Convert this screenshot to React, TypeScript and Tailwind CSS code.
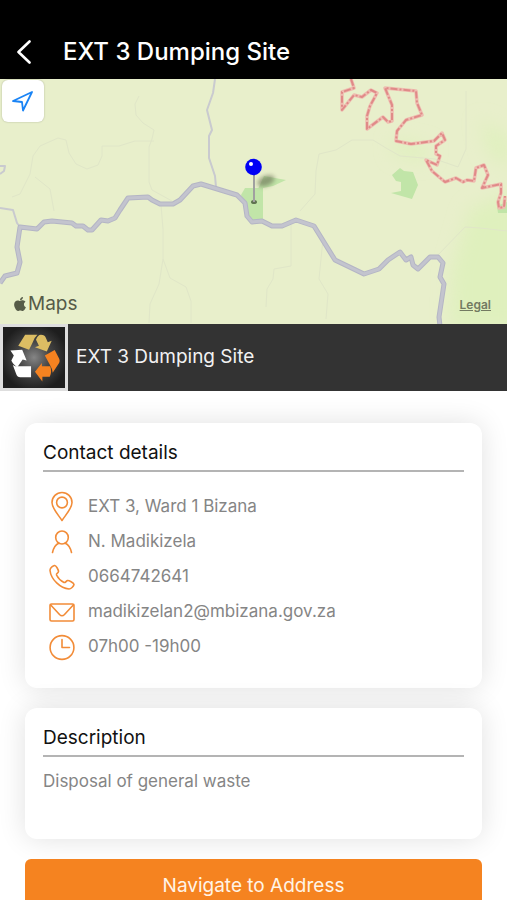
import { useState } from "react";
import type { ReactNode } from "react";
import { FaApple } from "react-icons/fa";

const MINOR_ROADS = [
  "M139 17 L135 25 L136 36 L143 44 L154 51 L152 60 L149 68 L149 103 L152 111 L172 122",
  "M154 62 L135 62 L119 67 L102 67 L102 77 L98 86 L87 90 L76 85 L69 74 L66 61 L58 59 L40 67 L33 77 L30 95 L20 115 L12 118",
  "M35 98 L50 110 L54 132",
  "M161 126 L163 150 L163 180 L170 199 L186 208 L191 222 L191 244",
  "M163 180 L159 205 L150 225 L149 244",
  "M466 12 L466 70 L458 88 L435 80 L400 77 L386 69 L373 61 L352 61 L336 71 L319 75 L316 92 L315 115 L300 132",
  "M291 146 L291 187 L274 190 L273 200 L267 210 L266 228",
  "M323 160 L319 200 L328 215 L326 240",
  "M438 176 L465 148 L480 149 L507 152",
];

const MAIN_ROAD =
  "M0 204 L5 197 L17 194 L20 183 L17 168 L20 148 L37 150 L44 143 L52 142 L72 144 L76 147 L83 147 L88 151 L92 151 L101 141 L108 142 L115 139 L120 131 L128 119 L148 118 L152 121 L160 125 L173 125 L180 121 L193 107 L201 105 L237 116 L245 124 L247 137 L252 143 L262 142 L272 147 L282 147 L296 141 L314 147 L335 181 L364 195 L379 190 L388 181 L400 173 L406 181 L411 178 L413 186 L418 190 L430 178 L438 178 L443 184 L440 198 L444 205 L439 238 L440 247";

const BORDER_LINE =
  "M351 0 L354 9 L342 13 L342 31 L354 16 L362 18 L371 11 L377 14 L370 27 L367 37 L367 50 L383 38 L388 43 L392 42 L392 26 L385 9 L416 12 L417 24 L422 36 L406 41 L397 52 L396 62 L411 65 L434 62 L442 54 L445 61 L436 67 L436 75 L440 77 L437 86 L426 81 L432 92 L445 103 L456 99 L463 103 L467 101 L474 102 L476 89 L484 86 L488 96 L482 109 L501 105 L501 114 L498 123 L499 129 L504 128 L505 117";

function MapDrawing() {
  return (
    <svg
      className="absolute inset-0 h-full w-full"
      viewBox="0 0 507 245"
      preserveAspectRatio="xMidYMid slice"
      fill="none"
      strokeLinejoin="round"
      aria-hidden="true"
    >
      <defs>
        <filter id="soft" x="-50%" y="-50%" width="200%" height="200%">
          <feGaussianBlur stdDeviation="2" />
        </filter>
        <filter id="haze" x="-50%" y="-50%" width="200%" height="200%">
          <feGaussianBlur stdDeviation="9" />
        </filter>
      </defs>
      <rect width="507" height="245" fill="#e8efcb" />
      <g fill="#dff0bd" filter="url(#haze)">
        <path d="M470 130 L520 110 L520 250 L450 250 L452 190 Z" />
        <path d="M480 40 L510 60 L510 90 L490 75 Z" />
        <path d="M392 60 L430 68 L425 82 L395 76 Z" />
      </g>
      <g stroke="#e0e6c8" strokeWidth="1">
        {MINOR_ROADS.map((d) => (
          <path key={d} d={d} />
        ))}
      </g>
      <g fill="#c1e5a8">
        <path d="M392 96 L400 89 L404 92 L413 93 L418 106 L412 120 L391 114 L401 112 L401 103 L396 102 Z" />
        <path d="M241 116 L245 109 L263 109 L263 141 L252 142 L247 134 Z" />
        <path d="M258 110 L264 97 L286 101 L273 107 Z" />
        <path d="M497 127 L507 123 L507 134 L498 134 Z" />
      </g>
      <g stroke="#c9cacf" strokeWidth="2">
        <path d="M215 0 L213 14 L207 31 L212 51 L209 57 L209 79 L215 97 L216 108" />
        <path d="M0 129 L13 131 L17 144 L20 148" />
        <path d="M0 87 L5 87 L4 92 L0 95" />
      </g>
      <path d={MAIN_ROAD} stroke="#b4b5c5" strokeWidth="5" />
      <path d={MAIN_ROAD} stroke="#c3c4ce" strokeWidth="3" />
      <path d={BORDER_LINE} stroke="#eebcb0" strokeWidth="3.5" />
      <path d={BORDER_LINE} stroke="#e08a88" strokeWidth="2" strokeDasharray="7 2 2 2" />
      <ellipse
        cx="266"
        cy="102"
        rx="9"
        ry="5"
        transform="rotate(-22 266 102)"
        fill="#6d7458"
        opacity="0.65"
        filter="url(#soft)"
      />
      <ellipse cx="254" cy="123" rx="3" ry="2" fill="#5f7351" />
      <path d="M254 94 V123" stroke="#a0a0a0" strokeWidth="2" />
      <circle cx="253.500" cy="88" r="8.3" fill="#0000f5" />
      <circle cx="251" cy="85" r="2" fill="#fff" />
    </svg>
  );
}

function RecycleLogo() {
  return (
    <svg className="block h-full w-full" viewBox="0 0 62 62" aria-hidden="true">
      <defs>
        <radialGradient id="glow" cx="50%" cy="50%" r="55%">
          <stop offset="0" stopColor="#858585" />
          <stop offset="0.45" stopColor="#484848" />
          <stop offset="1" stopColor="#1e1e1e" />
        </radialGradient>
      </defs>
      <rect width="62" height="62" fill="url(#glow)" />
      <g fill="#dcbd63">
        <path d="M22 8 H34.500 Q31 11 29.500 16 L26 23 L15 19 Z" />
        <path d="M33 13 Q35 8 38 8 Q42 8 43 11 L45 15.500 L49 14 L44 25 L32 20.500 L36 19 Z" />
      </g>
      <g fill="#fff">
        <path d="M7 24 L19 23 L23.500 34 L19.500 33 L14 41 Q9 37 8 34 L10.500 29 Z" />
        <path d="M9.500 38.500 L12 40 H28 V51 H17 Q14 51 13 48 Z" />
      </g>
      <g fill="#f58220">
        <path d="M42 29 L52 23.500 L56.500 32 Q58 35 55.500 38 L50 46.500 Q49.500 42 47 38 Z" />
        <path d="M32 45.500 L39 36.500 V40 H47.500 Q49.500 46 47 50.500 H39.500 V55.500 Z" />
      </g>
    </svg>
  );
}

function LineIcon({ children }: { children: ReactNode }) {
  return (
    <svg
      className="h-8 w-8 shrink-0"
      viewBox="0 0 32 32"
      fill="none"
      stroke="#f28c38"
      strokeWidth="1.6"
      strokeLinecap="round"
      strokeLinejoin="round"
      aria-hidden="true"
    >
      {children}
    </svg>
  );
}

const contactRows = [
  {
    text: "EXT 3, Ward 1 Bizana",
    icon: (
      <>
        <path d="M16 29.500 C12.500 24 6 17.500 6 11.500 A10 10 0 0 1 26 11.500 C26 17.500 19.500 24 16 29.500 Z" />
        <circle cx="16" cy="11.500" r="5.400" />
      </>
    ),
  },
  {
    text: "N. Madikizela",
    icon: (
      <>
        <ellipse cx="16" cy="11.500" rx="6.300" ry="6.500" />
        <path d="M6.500 26.500 C7.500 22 9.500 18.500 12.800 17.200 M19.200 17.200 C22.500 18.500 24.500 22 25.500 26.500" />
      </>
    ),
  },
  {
    text: "0664742641",
    icon: (
      <path d="M8.500 4.500 C6 5.500 4 7.500 4 9.500 C5 18.500 14.500 27.500 23 28 C25 28 27.500 25.500 28 23.500 C28 22 22.500 19 21.500 19.500 C19.500 20.500 19.500 22 18 21.500 C15 20 12 17 10.500 14 C10 12.500 12.500 12 12.500 10.500 C12.500 9 10 4 8.500 4.500 Z" />
    ),
  },
  {
    text: "madikizelan2@mbizana.gov.za",
    icon: (
      <>
        <rect x="4" y="8" width="24" height="17" rx="1.500" />
        <path d="M4.500 8.800 L13.500 18.500 Q16 21 18.500 18.500 L27.500 8.800" />
      </>
    ),
  },
  {
    text: "07h00 -19h00",
    icon: (
      <>
        <circle cx="16" cy="16.500" r="11.900" />
        <path d="M16 8.500 V16.500 H23.500" />
      </>
    ),
  },
];

function Card({ title, children }: { title: string; children: ReactNode }) {
  return (
    <section className="rounded-xl bg-white px-[18px] pt-4 shadow-[0_0_28px_rgba(0,0,0,0.12)]">
      <h2 className="border-b-2 border-[#b4b4b4] pb-[3px] text-[19px] leading-7 text-[#111]">{title}</h2>
      {children}
    </section>
  );
}

export default function App() {
  const [centered, setCentered] = useState(false);

  return (
    <div className="min-h-screen bg-white font-['Inter',sans-serif]">
      <header className="flex items-center gap-6 bg-black px-3 pt-6 text-white">
        <button type="button" aria-label="Back" className="flex h-[55px] w-[27px] items-center">
          <svg className="h-6 w-6" viewBox="0 0 24 24" fill="none" stroke="currentColor" strokeWidth="2.600" aria-hidden="true">
            <path d="M17.500 1.500 L6.500 12 L17.500 22.500" strokeLinecap="round" strokeLinejoin="round" />
          </svg>
        </button>
        <h1 className="text-2xl font-medium">EXT 3 Dumping Site</h1>
      </header>

      <div className="relative h-[245px] overflow-hidden">
        <MapDrawing />
        <button
          type="button"
          aria-label="Show my location"
          aria-pressed={centered}
          onClick={() => setCentered(!centered)}
          className="absolute top-px left-0.5 flex h-[42px] w-[42px] items-center justify-center rounded-md bg-white shadow-[0_0_2px_rgba(0,0,0,0.25)]"
        >
          <svg className="h-6 w-6" viewBox="0 0 24 24" fill="none" stroke="#1a84f5" strokeWidth="1.800" strokeLinejoin="round" aria-hidden="true">
            <path d="M21 3 L12 21.500 L11 13 L2 12 Z" />
          </svg>
        </button>
        <div className="absolute bottom-2 left-3 flex items-center text-[19px] leading-6 text-[#565b48]">
          <FaApple className="h-4 w-4" aria-hidden="true" />
          Maps
        </div>
        <a href="#legal" className="absolute right-4 bottom-[11px] text-xs leading-4 font-semibold text-[#737a62] underline">
          Legal
        </a>
      </div>

      <div className="flex items-center bg-[#333]">
        <div className="h-[67px] w-[68px] shrink-0 border-3 border-[#dedede] bg-[#1e1e1e]">
          <RecycleLogo />
        </div>
        <p className="px-2 text-[19px] text-[#f2f2f2]">EXT 3 Dumping Site</p>
      </div>

      <main className="flex flex-col gap-5 px-[25px] pt-8 pb-6">
        <Card title="Contact details">
          <ul className="pt-[17px] pb-6">
            {contactRows.map((row) => (
              <li key={row.text} className="flex h-[35px] items-center gap-[10px] pl-[3px] text-[17px] text-[#858585]">
                <LineIcon>{row.icon}</LineIcon>
                {row.text}
              </li>
            ))}
          </ul>
        </Card>

        <Card title="Description">
          <p className="pt-3 pb-[46px] text-[17px] leading-6 text-[#858585]">Disposal of general waste</p>
        </Card>

        <button type="button" className="h-[54px] rounded-md bg-[#f58320] text-[19px] text-[#fff4e6]">
          Navigate to Address
        </button>
      </main>
    </div>
  );
}
